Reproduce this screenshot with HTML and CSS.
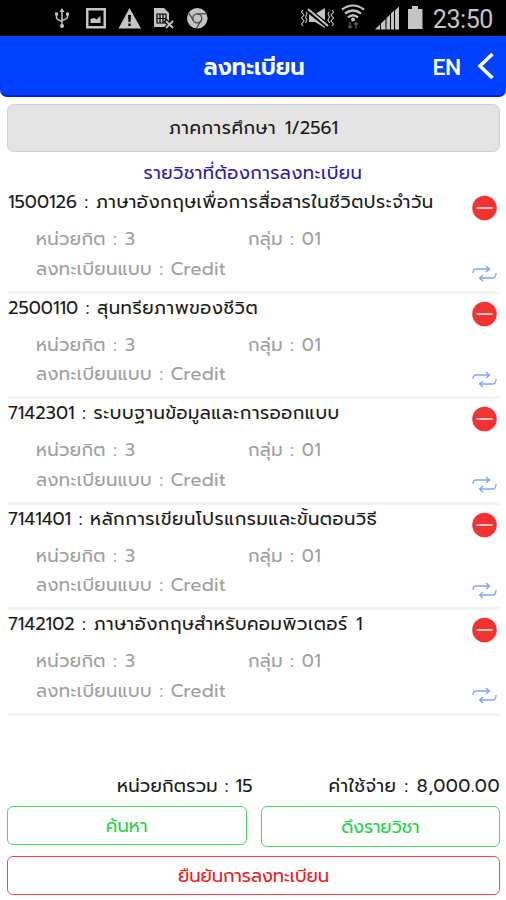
FILE: index.html
```html
<!DOCTYPE html>
<html lang="th">
  <head>
    <meta charset="utf-8">
    <title>ลงทะเบียน</title>
    <link rel="stylesheet" href="styles.css">
  </head>
  <body>
    <div class="statusbar">
      <svg width="506" height="36" viewBox="0 0 506 36" fill="#c4c4c4">
        <!-- usb -->
        <g fill="none" stroke="#c4c4c4" stroke-width="1.5">
          <path d="M62 11v14M56.500 14v3.500q0 2 5.500 4M67.500 14v3q0 2-5.500 3.500"/>
        </g>
        <path d="M62 8l2.500 4h-5zM55 12.500h3v3h-3zM66 12.500h3v3h-3z"/>
        <circle cx="62" cy="26" r="2"/>
        <!-- picture -->
        <path d="M86 8h20v20.500H86zm2.500 2.500v15.500h15V10.500zM90.500 23v-4l4-1 2 1.500 4-3.500v7z" fill-rule="evenodd"/>
        <!-- warning -->
        <path d="M129.500 8L141 28.500h-22.500z"/>
        <path d="M128 15h3l-.5 7h-2zM128.300 23.500h2.500v2.500h-2.500z" fill="#000"/>
        <!-- sim -->
        <path d="M154 8h10l5 5v14h-15z"/>
        <path d="M157 14h9v9h-9zM160 14v9M163 14v9M157 18.500h9" fill="none" stroke="#000" stroke-width="1.200"/>
        <path d="M165 20l9 9m0-9l-9 9" stroke="#000" stroke-width="4"/>
        <path d="M166 21l7 7m0-7l-7 7" stroke="#c4c4c4" stroke-width="1.800"/>
        <!-- chrome -->
        <circle cx="197.300" cy="18.300" r="10.300"/>
        <g fill="none" stroke="#444" stroke-width="1.300">
          <circle cx="197.300" cy="18.300" r="4.500"/>
          <path d="M197.300 13.800h9M193.400 20.500l-5-8M201.200 20.500l-5 8"/>
        </g>
        <!-- muted -->
        <path d="M309 14h6l10-6v20l-10-6h-6z"/>
        <path d="M308 10l20 16" stroke="#000" stroke-width="5"/>
        <path d="M308 9l20 17" stroke="#c4c4c4" stroke-width="2"/>
        <path d="M303 10l-1.500 2 2.500 3-2.500 3 2.500 3-2.500 3 1.500 2M332 10l1.500 2-2.500 3 2.500 3-2.500 3 2.500 3-1.500 2M306 12l1 2-1.500 3 1.500 3-1.500 3M329 12l-1 2 1.500 3-1.500 3 1.500 3" fill="none" stroke="#c4c4c4" stroke-width="1.100"/>
        <!-- wifi -->
        <g fill="none" stroke="#c4c4c4" stroke-width="2.200">
          <path d="M342 9.500q11-8 22 0M345 13.500q8-6 16 0M348 17.300q5-4 10 0"/>
        </g>
        <circle cx="353" cy="19.500" r="2"/>
        <path d="M350 22v6m-2-2l2 2 2-2M356 28.500v-6m-2 2l2-2 2 2" fill="none" stroke="#555" stroke-width="1.500"/>
        <!-- signal -->
        <path d="M375 29.500l5-5v5zM381 29.500v-6l4.500-4.500v10.500zM386.500 29.500V18l3.500-3.500v15zM391 29.500V13.500l3-3v19zM395 29.500V10.500l4-4v23z"/>
        <!-- battery -->
        <path d="M408 9h4V6h6v3h4.500v20H408z"/>
      </svg>
      <span class="clock">23:50</span>
    </div>

    <div class="header">
      <div class="title">ลงทะเบียน</div>
      <div class="lang">EN</div>
      <svg class="back" width="18" height="28" viewBox="0 0 18 28">
        <path d="M15.500 2L3 14l12.500 12" fill="none" stroke="#fff" stroke-width="3.600"/>
      </svg>
    </div>

    <div class="term"><span class="th">ภาคการศึกษา</span> 1/2561</div>
    <div class="caption th">รายวิชาที่ต้องการลงทะเบียน</div>

    <div class="courses" id="courses"></div>

    <div class="total">
      <span class="credits">หน่วยกิตรวม : 15</span>
      <span class="cost">ค่าใช้จ่าย : 8,000.00</span>
    </div>
    <div class="buttons">
      <button class="btn search">ค้นหา</button>
      <button class="btn fetch">ดึงรายวิชา</button>
    </div>
    <button class="btn confirm">ยืนยันการลงทะเบียน</button>

    <script src="script.js"></script>
  </body>
</html>
```
FILE: styles.css
```css
body { margin: 0; height: 900px; overflow: hidden; background: #fff; color: #1a1a1a; font-family: Prompt, Kanit, "Noto Sans Thai", "Noto Sans", sans-serif; font-size: 18px; }

.statusbar { position: relative; height: 36px; background: #000; }
.statusbar svg { display: block; }
.clock { position: absolute; right: 13px; top: 5px; color: #c4c4c4; font: 25px/30px Roboto, sans-serif; letter-spacing: -0.4px; }

.header { display: grid; grid-template-columns: 1fr 105px 1fr; align-items: center; box-sizing: border-box; height: 61px; background: #0040ff; border-bottom: 2px solid #0020dc; border-radius: 0 0 7px 7px; color: #fff; position: relative; }
.title { grid-column: 2; font-size: 22.5px; font-weight: 600; white-space: nowrap; text-align: center; padding: 2px 0 0 2px; }
.lang { justify-self: end; margin-right: 45px; padding-top: 3px; font-weight: 500; font-size: 22.5px; line-height: 30px; }
.back { position: absolute; right: 11px; top: 16px; }

.th { letter-spacing: 0.55px; word-spacing: 1px; }

.term { box-sizing: border-box; height: 48px; margin: 7px 6px 0 7px; border: 1px solid #ccd0d2; border-radius: 7px; background: #e4e4e4; line-height: 46px; text-align: center; word-spacing: 2px; }
.caption { height: 34px; margin-top: 4px; line-height: 35px; text-align: center; color: #2a1ea0; letter-spacing: 0.45px; }

.courses { height: 581px; margin: -2px 6px 0 8px; }
.course { position: relative; box-sizing: border-box; height: 105.5px; border-bottom: 3px solid #f3f3f3; }
.name { height: 29px; line-height: 28px; white-space: nowrap; word-spacing: 1px; }
.detail { display: grid; grid-template-columns: 212px 1fr; padding-left: 28px; line-height: 29.5px; margin-top: 8px; color: #9e9e9e; letter-spacing: 0.35px; word-spacing: 0.5px; }
.remove { position: absolute; right: 3px; top: 7px; }
.swap { position: absolute; right: 3px; top: 76px; }

.total { display: flex; justify-content: space-between; height: 37px; padding: 0 6px 0 117px; line-height: 34px; }
.credits { letter-spacing: 0.25px; }
.cost { letter-spacing: 0.5px; word-spacing: 1px; }
.buttons { display: grid; grid-template-columns: 1fr 1fr; column-gap: 14px; align-items: start; margin: 0 6px 0 7px; height: 50px; }
.btn { display: block; box-sizing: border-box; height: 39px; padding: 0; border: 1.5px solid #46d864; border-radius: 6px; background: #fff; color: #2ad04e; font: inherit; line-height: 34px; }
.search { letter-spacing: 0.1px; }
.fetch { height: 41px; letter-spacing: -0.2px; }
.confirm { width: 493px; margin: 0 6px 0 7px; border-color: #f44; color: #ee2020; letter-spacing: -0.1px; }
```
FILE: script.js
```js
var courses = [
  ['1500126', 'ภาษาอังกฤษเพื่อการสื่อสารในชีวิตประจำวัน'],
  ['2500110', 'สุนทรียภาพของชีวิต'],
  ['7142301', 'ระบบฐานข้อมูลและการออกแบบ'],
  ['7141401', 'หลักการเขียนโปรแกรมและขั้นตอนวิธี'],
  ['7142102', 'ภาษาอังกฤษสำหรับคอมพิวเตอร์ 1']
];

var removeIcon = '<svg class="remove" width="25" height="26" viewBox="0 0 25 26"><circle cx="12.500" cy="13" r="12.300" fill="#f33232"/><path d="M4.500 13h16" stroke="#ffc8c8" stroke-width="2"/></svg>';
var swapIcon = '<svg class="swap" width="25" height="18" viewBox="0 0 25 18" fill="none" stroke="#80a4fa" stroke-width="1.300"><path d="M1 9q0-4 3-4h13M14 2l3.500 3-3.500 3M24 9q0 5-3 5H8M11 11l-3.500 3 3.500 3"/></svg>';

document.getElementById('courses').innerHTML = courses.map(function(c) {
  return '<div class="course">' +
    '<div class="name">' + c[0] + ' : <span class="th">' + c[1] + '</span></div>' +
    '<div class="detail"><span>หน่วยกิต : 3</span><span>กลุ่ม : 01</span>' +
    '<span>ลงทะเบียนแบบ : Credit</span></div>' +
    removeIcon + swapIcon + '</div>';
}).join('');
```
